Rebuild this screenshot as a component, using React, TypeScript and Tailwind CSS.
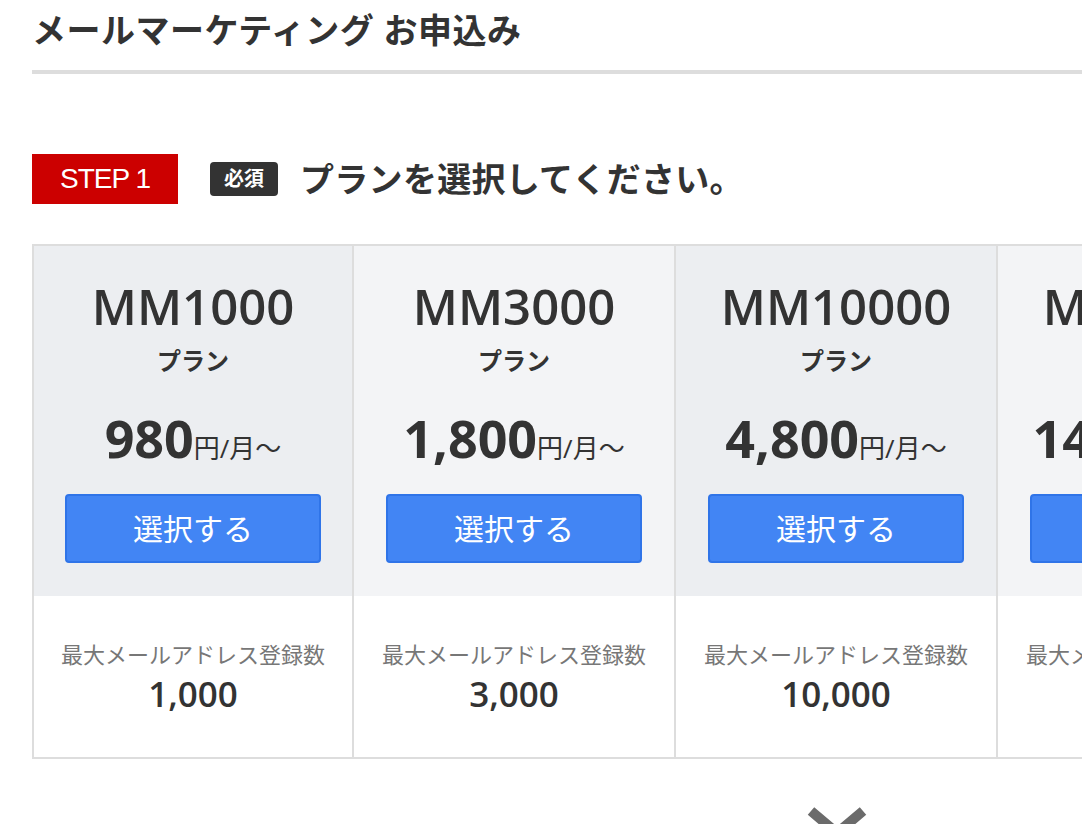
const plans = [
  { name: 'MM1000', price: '980', max: '1,000' },
  { name: 'MM3000', price: '1,800', max: '3,000' },
  { name: 'MM10000', price: '4,800', max: '10,000' },
  { name: 'MM30000', price: '14,800', max: '30,000' },
  { name: 'MM50000', price: '19,800', max: '50,000' },
]

function PlanColumn({ plan, index }: { plan: (typeof plans)[number]; index: number }) {
  return (
    <div className="w-[322px] shrink-0 border-r-2 first:border-l-2 border-[#dddddd] flex flex-col">
      <div className={`flex flex-col items-center pt-[30px] pb-[33px] ${index % 2 === 0 ? 'bg-[#eceef1]' : 'bg-[#f3f4f6]'}`}>
        <div className="text-[49px] leading-[60px] font-semibold text-[#333]">{plan.name}</div>
        <div className="mt-[7px] text-[24px] leading-[36px] font-bold text-[#333]">プラン</div>
        <div className="mt-[29px] leading-[60px] text-[#333] flex items-baseline">
          <span className="text-[52px] font-bold">{plan.price}</span>
          <span className="text-[26px]">円/月〜</span>
        </div>
        <button className="mt-[16px] w-[256px] h-[69px] rounded-[4px] bg-[#4285f4] border-2 border-[#2f74e8] text-white text-[30px]">
          選択する
        </button>
      </div>
      <div className="flex flex-col items-center pt-[42px] pb-[43px] bg-white">
        <div className="text-[22px] leading-[32px] text-[#777]">最大メールアドレス登録数</div>
        <div className="mt-[4px] text-[35px] leading-[40px] font-semibold text-[#333]">{plan.max}</div>
      </div>
    </div>
  )
}

export default function App() {
  return (
    <div
      className="w-[1082px] h-[824px] overflow-hidden bg-white"
      style={{ fontFamily: '"Open Sans", "Noto Sans CJK JP", sans-serif' }}
    >
      <div className="w-[1610px] ml-[32px]">
        <h1 className="text-[34px] leading-[60px] font-bold text-[#333] tracking-[0.5px]">メールマーケティング お申込み</h1>
        <div className="mt-[10px] h-[4px] bg-[#dddddd]"></div>

        <div className="mt-[80px] flex items-center h-[50px]">
          <div
            className="w-[146px] h-[50px] bg-[#cc0000] text-white text-[28px] tracking-[-1px] flex items-center justify-center"
            style={{ fontFamily: '"Liberation Sans", sans-serif' }}
          >
            STEP 1
          </div>
          <span className="ml-[32px] w-[68px] h-[34px] rounded-[4px] bg-[#333] text-white text-[20px] font-bold flex items-center justify-center">
            必須
          </span>
          <h2 className="ml-[22px] text-[34px] font-bold text-[#333] tracking-[0.3px]">プランを選択してください。</h2>
        </div>

        <div className="mt-[40px] flex border-t-2 border-b-2 border-[#dddddd]">
          {plans.map((p, i) => (
            <PlanColumn key={p.name} plan={p} index={i} />
          ))}
        </div>

        <div className="mt-[48px] flex justify-center">
          <svg width="60" height="32" viewBox="0 0 60 32">
            <path d="M4 4 L30 26 L56 4" fill="none" stroke="#6b6b6b" strokeWidth="10" strokeLinejoin="miter" />
          </svg>
        </div>
      </div>
    </div>
  )
}
